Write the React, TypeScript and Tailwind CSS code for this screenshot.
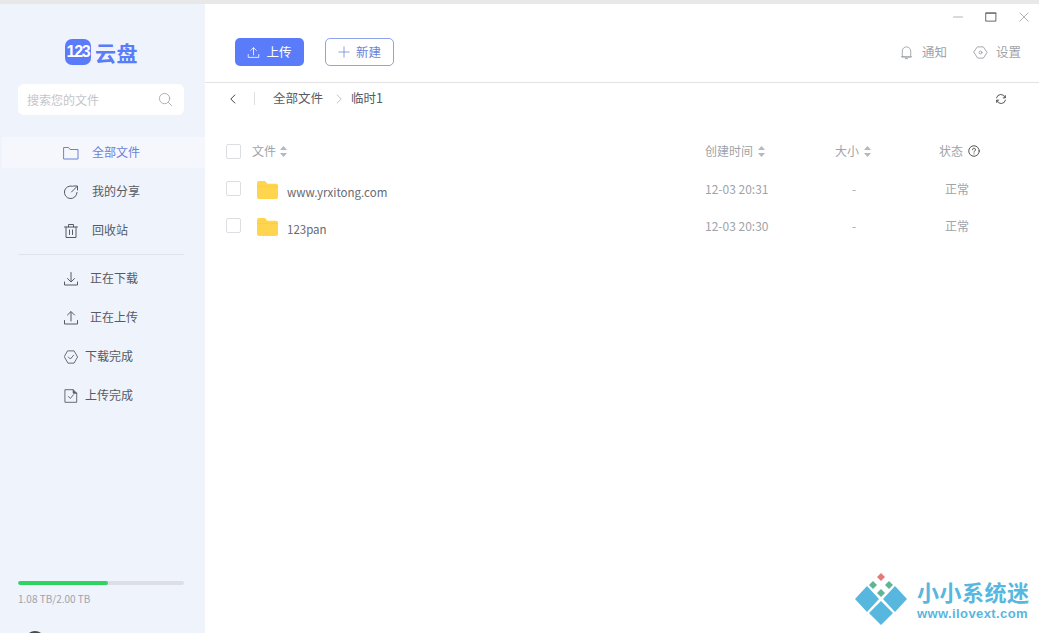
import type { ReactNode } from "react";

const FONT = "font-['Noto_Sans_CJK_SC','Noto_Sans',sans-serif]";

const Ico = ({ size = 16, className = "", children }: { size?: number; className?: string; children: ReactNode }) => (
  <svg width={size} height={size} viewBox="0 0 16 16" fill="none" stroke="currentColor" strokeWidth="1" strokeLinecap="round" strokeLinejoin="round" className={"shrink-0 " + className}>
    {children}
  </svg>
);

const FolderLine = () => (
  <Ico><path d="M1 2.500h4.600l1.400 2h8v9.500H1z" /></Ico>
);
const ShareIco = () => (
  <Ico>
    <path d="M9.500 2.200A6.300 6.300 0 1 0 14 8.500" />
    <path d="M8.500 8 14 2.500M10.500 2H14.500V6" />
  </Ico>
);
const TrashIco = () => (
  <Ico>
    <path d="M1.500 4h13M5.500 4V1.500h5V4M3 4v10.500h10V4M6.500 7v4.500M9.500 7v4.500" />
  </Ico>
);
const DownIco = () => (
  <Ico>
    <path d="M8 1.500v9M4.500 7.500 8 11l3.500-3.500M1.500 11v3h13v-3" />
  </Ico>
);
const UpIco = () => (
  <Ico>
    <path d="M8 11V2M4.500 5 8 1.500 11.500 5M1.500 10.500v3.500h13v-3.500" />
  </Ico>
);
const HexCheck = () => (
  <Ico size={14}>
    <path d="M4.500 1h7L15.500 8l-4 7h-7L.5 8z" />
    <path d="M5 8 7.300 10.300 11 6" />
  </Ico>
);
const FileCheck = () => (
  <Ico size={14}>
    <path d="M1.500 .8h9L14.500 4.800V15.200h-13z" />
    <path d="M5 8.500 7.300 10.800 10.800 6.500" />
    <path d="M10.500 1v3.800h4" fill="currentColor" />
  </Ico>
);

const SortArrows = () => (
  <svg width="7" height="11" viewBox="0 0 7 11" className="shrink-0 text-[#b5b8bf]" fill="currentColor">
    <path d="M3.500 0 7 4H0zM0 7h7l-3.500 4z" />
  </svg>
);

const YellowFolder = () => (
  <svg width="21" height="18" viewBox="0 0 22 19" preserveAspectRatio="none" className="shrink-0">
    <path d="M0 2a2 2 0 0 1 2-2h5.500c1 0 1.500.5 2.200 1.500L11 3h9a2 2 0 0 1 2 2v12a2 2 0 0 1-2 2H2a2 2 0 0 1-2-2z" fill="#ffd54f" />
    <path d="M0 6h22" stroke="#f7c93e" strokeWidth="0.6" />
  </svg>
);

const SideItem = ({ icon, label, gap, pad = "pl-[63px]", active = false }: { icon: ReactNode; label: string; gap: string; pad?: string; active?: boolean }) => (
  <div className={`flex h-[31px] items-center text-xs ${pad} ${gap} ${active ? "ml-[2px] !pl-[61px] bg-[#f5f7fd] text-[#6a82d8]" : "text-[#555a63]"}`}>
    {icon}
    <span className="mb-[2px]">{label}</span>
  </div>
);

const Checkbox = () => <div className="h-[15px] w-[15px] shrink-0 rounded-[2px] border border-[#dcdee2] bg-white" />;

const rows = [
  { name: "www.yrxitong.com", time: "12-03 20:31", nameClass: "mt-[8px]" },
  { name: "123pan", time: "12-03 20:30", nameClass: "mt-[8px]" },
];

export default function App() {
  return (
    <div className={`relative flex h-[633px] w-[1039px] flex-col overflow-hidden bg-white ${FONT}`}>
      <div className="h-[4px] shrink-0 bg-[#e8e8e8]" />
      <div className="flex min-h-0 flex-1">
        {/* sidebar */}
        <aside className="flex w-[205px] shrink-0 flex-col overflow-hidden bg-[#eff3fb]">
          <div className="mt-[35px] flex h-[26px] items-center pl-[65px]">
            <div className="flex h-[26px] w-[26px] items-center justify-center rounded-[7px] bg-[#5b7cfa] text-[16px] font-bold tracking-[-1.2px] text-white font-['Liberation_Sans',sans-serif]">123</div>
            <span className="ml-[4px] text-[21px] font-bold leading-none tracking-[0.5px] text-[#5b7cfa]">云盘</span>
          </div>
          <div className="ml-[18px] mr-[21px] mt-[19px] flex h-[31px] items-center justify-between rounded-md bg-white pl-[9px] pr-[11px] text-xs text-[#c3c5ca]">
            <span>搜索您的文件</span>
            <Ico size={15} className="text-[#a9acb2]">
              <circle cx="7" cy="7" r="5.500" />
              <path d="M11.200 11.200 14.500 14.500" />
            </Ico>
          </div>
          <div className="mt-[22px] flex flex-col gap-2">
            <SideItem active icon={<FolderLine />} label="全部文件" gap="gap-[13px]" />
            <SideItem icon={<ShareIco />} label="我的分享" gap="gap-[13px]" />
            <SideItem icon={<TrashIco />} label="回收站" gap="gap-[13px]" />
          </div>
          <div className="ml-[18px] mr-[21px] mt-[8px] h-px bg-[#dfe3ec]" />
          <div className="mt-[8px] flex flex-col gap-2">
            <SideItem icon={<DownIco />} label="正在下载" gap="gap-[11px]" />
            <SideItem icon={<UpIco />} label="正在上传" gap="gap-[11px]" />
            <SideItem icon={<HexCheck />} label="下载完成" gap="gap-[7px]" pad="pl-[64px]" />
            <SideItem icon={<FileCheck />} label="上传完成" gap="gap-[7px]" pad="pl-[64px]" />
          </div>
          <div className="ml-[18px] mr-[21px] mt-auto h-[4px] overflow-hidden rounded-full bg-[#dcdfe6]">
            <div className="h-full w-[54%] rounded-full bg-[#2fd35f]" />
          </div>
          <div className="ml-[18px] mt-[6px] text-[10px] leading-[15px] text-[#a0a4ab]">1.08 TB/2.00 TB</div>
          <div className="ml-[25px] mt-[25px] -mb-[18px] h-[20px] w-[20px] shrink-0 rounded-full bg-[#4a4a4a]" />
        </aside>

        {/* main */}
        <main className="flex min-w-0 flex-1 flex-col">
          <header className="flex h-[79px] shrink-0 flex-col border-b border-[#e3e3e3]">
            <div className="flex h-[26px] items-center justify-end gap-[21px] pr-[9px] text-[#9a9a9a]">
              <Ico size={12}><path d="M2 8h12" /></Ico>
              <Ico size={12} className="text-[#666]"><path d="M1.500 2.500h13v11h-13zM1.500 3h13" strokeWidth="1.300" /></Ico>
              <Ico size={12}><path d="M2.500 2.500 13.500 13.500M13.500 2.500 2.500 13.500" /></Ico>
            </div>
            <div className="mt-[8px] flex h-[28px] items-center pl-[30px] pr-[18px]">
              <button className="flex h-[28px] w-[69px] items-center justify-center gap-[6px] rounded-[5px] bg-[#5b7cfa] text-[12.5px] text-white">
                <Ico size={13}><path d="M8 11V2.500M4.500 5.500 8 2l3.500 3.500M1.500 10.500V14h13v-3.500" /></Ico>
                上传
              </button>
              <button className="ml-[21px] flex h-[28px] w-[69px] items-center justify-center gap-[6px] rounded-[5px] border border-[#8ea3ea] text-[12.5px] text-[#6a82d8]">
                <Ico size={12}><path d="M8 1v14M1 8h14" /></Ico>
                新建
              </button>
              <div className="ml-auto flex items-center gap-[8px] text-[12.5px] text-[#a0a3a9]">
                <Ico size={15}>
                  <path d="M3.500 12.500V6.500a4.500 4.500 0 0 1 9 0v6zM2.500 12.500h11M6.800 14.500h2.400" />
                </Ico>
                <span>通知</span>
                <Ico size={15} className="ml-[18px]">
                  <path d="M5 2h6l4 6-4 6H5L1 8z" />
                  <circle cx="8" cy="8" r="1.500" />
                </Ico>
                <span>设置</span>
              </div>
            </div>
          </header>

          <div className="flex h-[33px] shrink-0 items-center pb-[2px] pl-[23px] pr-[32px] text-[12.5px] text-[#555a63]">
            <Ico size={10} className="text-[#444]"><path d="M11 1.500 4.500 8l6.500 6.500" strokeWidth="1.600" /></Ico>
            <div className="ml-[16px] h-[13px] w-px bg-[#dcdee2]" />
            <span className="ml-[18px]">全部文件</span>
            <Ico size={10} className="ml-[11px] text-[#9a9da3]"><path d="M5 1.500 11.500 8 5 14.500" /></Ico>
            <span className="ml-[7px]">临时1</span>
            <Ico size={12} className="ml-auto text-[#444]">
              <path d="M2 6.500A6 6 0 0 1 13.500 6M14 9.500A6 6 0 0 1 2.500 10" strokeWidth="1.200" />
              <path d="M13.800 3.500V6.500H11M2.200 12.500V9.500H5" strokeWidth="1.200" />
            </Ico>
          </div>

          <div className="mt-[17px] grid h-[36px] grid-cols-[500px_130px_104px_1fr] items-center text-xs text-[#a0a3a9]">
            <div className="flex items-center pl-[21px]">
              <Checkbox />
              <span className="ml-[11px]">文件</span>
              <span className="ml-[4px]"><SortArrows /></span>
            </div>
            <div className="flex items-center gap-[5px]">创建时间<SortArrows /></div>
            <div className="flex items-center gap-[5px]">大小<SortArrows /></div>
            <div className="flex items-center gap-[5px]">
              状态
              <Ico size={12} className="text-[#444]">
                <circle cx="8" cy="8" r="7" strokeWidth="1.200" />
                <path d="M6 6.300a2 2 0 1 1 3 1.700c-.7.400-1 .8-1 1.500M8 11.800v.2" strokeWidth="1.200" />
              </Ico>
            </div>
          </div>

          <div className="mt-[1px] flex flex-col">
            {rows.map((r, i) => (
              <div key={i} className="grid h-[37px] grid-cols-[500px_130px_104px_1fr] items-center text-xs text-[#a0a3a9]">
                <div className="flex items-center pl-[21px]">
                  <Checkbox />
                  <span className="ml-[16px] mt-[4px]"><YellowFolder /></span>
                  <span className={`ml-[9px] text-[11.5px] text-[#666a70] ${r.nameClass}`}>{r.name}</span>
                </div>
                <div>{r.time}</div>
                <div className="pl-[17px]">-</div>
                <div className="pl-[6px]">正常</div>
              </div>
            ))}
          </div>
        </main>
      </div>

      {/* watermark */}
      <div className="absolute left-[854px] top-[572px] flex items-center">
        <svg width="54" height="54" viewBox="0 0 54 54" className="shrink-0">
          <path d="M27 1l4 4-4 4-4-4z" fill="#e37a78" />
          <path d="M19 9l4 4-4 4-4-4zM35 9l4 4-4 4-4-4zM27 17l4 4-4 4-4-4z" fill="#5fb596" />
          <path d="M13 14 25 27 13 40 1 27zM41 14 53 27 41 40 29 27zM27 29 39 41 27 53 15 41z" fill="#58b7de" />
        </svg>
        <div className="ml-[9px] flex flex-col text-[#58b7de]">
          <span className="text-[22px] font-bold leading-[28px] tracking-[0.5px]">小小系统迷</span>
          <span className="mt-[1px] text-[13px] font-bold leading-[16px] tracking-[0.4px] font-['Liberation_Sans',sans-serif]">www.ilovext.com</span>
        </div>
      </div>
    </div>
  );
}
